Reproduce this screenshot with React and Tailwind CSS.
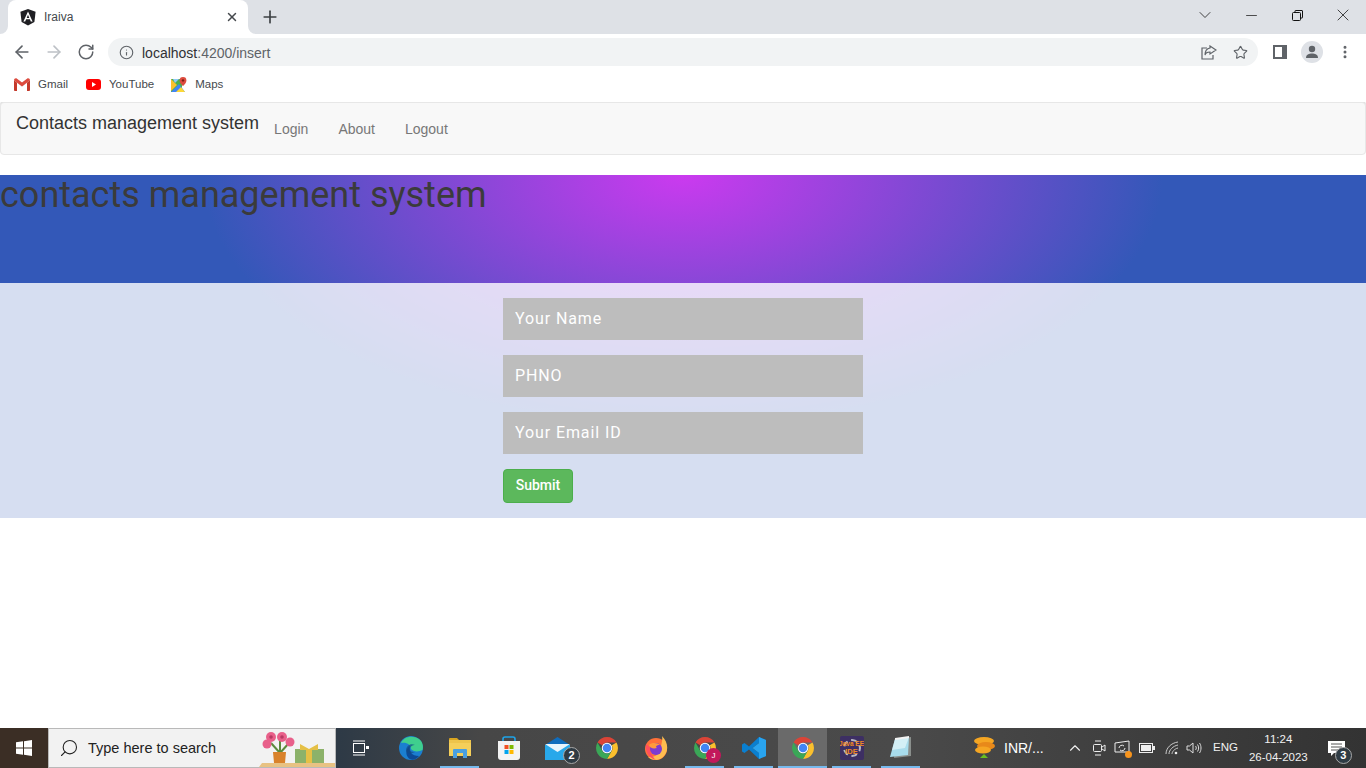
import { ArrowLeft, ArrowRight, RotateCw, Info, Star, X, Plus, ChevronDown, Minus, MoreVertical, ChevronUp, Search } from 'lucide-react'

const sans = "font-['Liberation_Sans',Arial,sans-serif]"

function AngularLogo() {
  return (
    <svg width="16" height="17" viewBox="0 0 16 17">
      <path d="M8 0 L15.6 2.7 L14.4 12.9 L8 16.6 L1.6 12.9 L.4 2.7 Z" fill="#1f1f23" />
      <path d="M8 2.4 L3.4 12.6 H5.2 L6.1 10.3 H9.9 L10.8 12.6 H12.6 Z M8 5.8 L9.3 8.9 H6.7 Z" fill="#fff" fillRule="evenodd" />
    </svg>
  )
}

function GmailIcon() {
  return (
    <svg width="16" height="13" viewBox="0 0 16 13">
      <path d="M0 2 V12 a1 1 0 0 0 1 1 H3 V5 L8 8.6 L13 5 V13 H15 a1 1 0 0 0 1-1 V2 L13 .9 L8 4.6 L3 .9 Z" fill="#d9d9d9" />
      <path d="M0 2.2 L3 4.8 V13 H1 a1 1 0 0 1-1-1 Z" fill="#c5392b" />
      <path d="M16 2.2 L13 4.8 V13 H15 a1 1 0 0 0 1-1 Z" fill="#c5392b" />
      <path d="M0 2.2 C0 .6 1.8 -.4 3 .7 L8 4.6 L13 .7 C14.2 -.4 16 .6 16 2.2 L8 8.4 Z" fill="#dd4b3e" />
    </svg>
  )
}

function YoutubeIcon() {
  return (
    <svg width="15" height="11" viewBox="0 0 15 11">
      <rect width="15" height="11" rx="3" fill="#f00" />
      <path d="M6 3 L10 5.5 L6 8 Z" fill="#fff" />
    </svg>
  )
}

function MapsIcon() {
  return (
    <svg width="16" height="16" viewBox="0 0 16 16">
      <path d="M0 2 H11 V15 H0 Z" fill="#4caf50" />
      <path d="M0 15 L8 7 L14 15 Z" fill="#4285f4" />
      <path d="M0 2 L6 8 L0 14 Z" fill="#fbc02d" />
      <path d="M2 2 H8 L4 6 Z" fill="#90caf9" />
      <path d="M5 15 L10 10 L14 15 Z" fill="#fdd835" />
      <path d="M12 0 a3.4 3.4 0 0 1 3.4 3.4 C15.4 6 12 9 12 9 S8.6 6 8.6 3.4 A3.4 3.4 0 0 1 12 0 Z" fill="#dd4b3e" />
      <circle cx="12" cy="3.4" r="1.2" fill="#7b1f16" />
    </svg>
  )
}

function ChromeIcon({ size = 24 }) {
  return (
    <svg width={size} height={size} viewBox="0 0 48 48">
      <path d="M24 2 A22 22 0 0 1 43 13 H24 A11 11 0 0 0 14.5 18.5 L5 13 A22 22 0 0 1 24 2 Z" fill="#db4437" />
      <path d="M43 13 A22 22 0 0 1 24 46 L33.5 29.5 A11 11 0 0 0 33.5 18.5 Z" fill="#fbc02d" />
      <path d="M24 46 A22 22 0 0 1 5 13 L14.5 29.5 A11 11 0 0 0 33.5 29.5 Z" fill="#3aa757" />
      <circle cx="24" cy="24" r="10.5" fill="#fff" />
      <circle cx="24" cy="24" r="8.5" fill="#4285f4" />
    </svg>
  )
}

function EdgeIcon() {
  return (
    <svg width="24" height="24" viewBox="0 0 24 24">
      <circle cx="12" cy="12" r="12" fill="#1b7fd0" />
      <path d="M2 7 C5 0 14 -1 20 3 C24 6 24.5 11 23.5 14 C20 16 14 16 12 13 C12 9 8 6 2 7 Z" fill="#3fcf8e" />
      <path d="M12 23.6 C6 21 6 13 11 10 C9 15 13 20 20 20 C18 22.6 15 24 12 23.6 Z" fill="#0c4a96" />
      <path d="M7 15 C7 9 12 7 16 9 C14 9 11 10 11 13 C11 16 14 16 16 16 C12 18 8 18 7 15 Z" fill="#134a86" opacity=".7" />
    </svg>
  )
}

function FolderIcon() {
  return (
    <svg width="22" height="20" viewBox="0 0 22 20">
      <path d="M0 1 a1 1 0 0 1 1-1 H8 L10 2 H0 Z" fill="#d9a520" />
      <path d="M0 2 H22 V18 H0 Z" fill="#f5cf5a" />
      <path d="M0 2 H22 V5 H0 Z" fill="#e8b93b" opacity=".5" />
      <path d="M4 18 V12 a1 1 0 0 1 1-1 H17 a1 1 0 0 1 1 1 V20 H14 V15 H8 V20 H4 Z" fill="#4a9fe0" />
    </svg>
  )
}

function StoreIcon() {
  return (
    <svg width="24" height="24" viewBox="0 0 24 24">
      <path d="M6 6 V3 a2 2 0 0 1 2-2 H16 a2 2 0 0 1 2 2 V6" fill="none" stroke="#1ea4e9" strokeWidth="1.6" />
      <path d="M1 5 H23 V21 a3 3 0 0 1-3 3 H4 a3 3 0 0 1-3-3 Z" fill="#f3f3f3" />
      <rect x="7.5" y="9" width="4" height="4" fill="#f25022" />
      <rect x="12.5" y="9" width="4" height="4" fill="#7fba00" />
      <rect x="7.5" y="14" width="4" height="4" fill="#00a4ef" />
      <rect x="12.5" y="14" width="4" height="4" fill="#ffb900" />
    </svg>
  )
}

function MailIcon() {
  return (
    <svg width="25" height="23" viewBox="0 0 25 23">
      <path d="M12.5 0 L25 8 H0 Z" fill="#0f6cbd" />
      <rect y="8" width="25" height="15" fill="#28a8ea" />
      <path d="M0 7 H25 L12.5 15 Z" fill="#e8f4fc" />
    </svg>
  )
}

function FirefoxIcon() {
  return (
    <svg width="24" height="24" viewBox="0 0 24 24">
      <circle cx="12" cy="13" r="11" fill="#ff7139" />
      <path d="M18 0 C24 6 25 14 20 20 C16 25 8 25 4 21 C10 22 17 18 17 12 C17 8 19 4 18 0 Z" fill="#ffbd4f" />
      <path d="M2 8 C1 14 4 22 12 24 C7 20 6 15 7 12 Z" fill="#ff4f5e" />
      <circle cx="12" cy="13" r="6" fill="#7d3bd0" />
      <path d="M5 9 C8 6 14 7 16 9 C12 9 11 11 13 12 C9 13 6 12 5 9 Z" fill="#ff9a3d" />
    </svg>
  )
}

function VscodeIcon() {
  return (
    <svg width="24" height="24" viewBox="0 0 24 24">
      <path d="M17 1 L24 4 V20 L17 23 L7 13.5 L2.5 17 L0 15.5 V8.5 L2.5 7 L7 10.5 Z M17 7 L10.5 12 L17 17 Z" fill="#0a7fd0" fillRule="evenodd" />
      <path d="M17 1 L24 4 V20 L17 23 Z M17 7 V17 L10.5 12 Z" fill="#29a4ef" fillRule="evenodd" />
    </svg>
  )
}

function JavaEeIcon() {
  return (
    <div className="relative flex h-6 w-6 flex-col items-center justify-center overflow-hidden rounded-[2px] bg-[#3d2f63] leading-[8px]">
      <div className="absolute h-[18px] w-[18px] rounded-full border-2 border-dashed border-[#b9b9c4]" />
      <span className={`relative whitespace-nowrap text-[6.5px] font-bold text-[#f08a24] ${sans}`}>Java EE</span>
      <span className={`relative text-[7.5px] font-bold text-[#f08a24] ${sans}`}>IDE</span>
    </div>
  )
}

function NotepadIcon() {
  return (
    <svg width="24" height="24" viewBox="0 0 24 24">
      <path d="M7 3 L22 1 V20 L5 22 Z" fill="#8a8f8c" />
      <path d="M6 3 L20 1 L19 19 L1 21 Z" fill="#a8dcec" />
      <path d="M6 3 L20 1 L16 12 L3 14 Z" fill="#e6f6fb" opacity=".7" />
      <path d="M6 2 L20 0 V2 L6 4 Z" fill="#f3f3f3" />
    </svg>
  )
}

function CoinIcon() {
  return (
    <svg width="24" height="24" viewBox="0 0 24 24">
      <ellipse cx="12" cy="5" rx="10" ry="4" fill="#f5a623" />
      <ellipse cx="14" cy="10" rx="9" ry="4" fill="#e8891a" />
      <ellipse cx="11" cy="14" rx="8" ry="3.5" fill="#f5a623" />
      <path d="M12 18 L16 22 H8 Z" fill="#6bbf1f" />
    </svg>
  )
}

function TaskApp({ children, open, active }) {
  return (
    <div className={`relative flex h-10 w-[49px] shrink-0 items-center justify-center ${active ? 'bg-[#6a6a6a]' : ''}`}>
      {children}
      {open && <div className={`absolute bottom-0 h-[2px] bg-[#76b9ed] ${active ? 'inset-x-0' : 'inset-x-[5px]'}`} />}
    </div>
  )
}

function Badge({ n }) {
  return (
    <div className={`absolute flex h-[17px] w-[17px] items-center justify-center rounded-full border border-[#a8a8a8] bg-[#2f3b44] text-[11px] font-bold text-white ${sans}`}>
      {n}
    </div>
  )
}

function BrowserChrome() {
  return (
    <div className={`shrink-0 ${sans}`}>
      <div className="flex h-[34px] items-end bg-[#dee1e6]">
        <div className="relative ml-2 flex h-[34px] w-[240px] items-center rounded-t-lg bg-white pl-3 pr-[9px]">
          <svg className="absolute bottom-0 -left-2" width="8" height="8"><path d="M8 0 V8 H0 A8 8 0 0 0 8 0 Z" fill="#fff" /></svg>
          <svg className="absolute bottom-0 -right-2" width="8" height="8"><path d="M0 0 V8 H8 A8 8 0 0 1 0 0 Z" fill="#fff" /></svg>
          <AngularLogo />
          <span className="ml-2 flex-1 text-xs text-[#45494d]">Iraiva</span>
          <X size={14} strokeWidth={2.5} className="text-[#45494d]" />
        </div>
        <div className="flex h-[34px] w-[44px] items-center justify-center">
          <Plus size={20} strokeWidth={2} className="text-[#3c4043]" />
        </div>
        <div className="ml-auto flex h-[30px] self-start items-center text-[#222]">
          <div className="flex w-[46px] justify-center"><ChevronDown size={20} strokeWidth={1} /></div>
          <div className="flex w-[46px] justify-center"><Minus size={17} strokeWidth={1.1} /></div>
          <div className="flex w-[46px] justify-center">
            <svg width="11" height="11" viewBox="0 0 11 11" fill="none" stroke="#111" strokeWidth="1">
              <rect x=".5" y="2.5" width="8" height="8" rx="1" />
              <path d="M3 2.5 V1 a.5.5 0 0 1 .5-.5 H10 a.5.5 0 0 1 .5.5 V7.5 a.5.5 0 0 1-.5.5 H8.5" />
            </svg>
          </div>
          <div className="flex w-[46px] justify-center"><X size={20} strokeWidth={1} /></div>
        </div>
      </div>
      <div className="flex h-9 items-center bg-white pl-[12px] pr-[13px]">
        <ArrowLeft size={20} strokeWidth={2} className="text-[#5f6368]" />
        <ArrowRight size={20} strokeWidth={2} className="ml-[12px] text-[#bdc1c6]" />
        <RotateCw size={18} strokeWidth={2} className="ml-[13px] text-[#5f6368]" />
        <div className="ml-[13px] flex h-7 flex-1 items-center rounded-full bg-[#f1f3f4] pl-[11px] pr-[10px]">
          <Info size={15} strokeWidth={1.8} className="text-[#5f6368]" />
          <span className="ml-[8px] flex-1 pt-[1px] text-sm text-[#303134]">localhost<span className="text-[#5f6368]">:4200/insert</span></span>
          <svg width="16" height="15" viewBox="0 0 16 15" fill="none" stroke="#5f6368" strokeWidth="1.2">
            <path d="M6 3 H1 V14 H12 V10" />
            <path d="M9 1 L15 5 L9 9 V7 C6 7 4.5 8 4 10 C4 6 6 3.5 9 3 Z" />
          </svg>
          <Star size={15} strokeWidth={1.8} className="ml-[16px] text-[#5f6368]" />
        </div>
        <svg className="ml-[15px]" width="14" height="14" viewBox="0 0 14 14">
          <rect width="14" height="14" fill="#5f6368" />
          <rect x="2" y="2" width="7" height="10" fill="#fff" />
        </svg>
        <div className="ml-[14px] flex h-[22px] w-[22px] items-center justify-center rounded-full bg-[#dee1e6]">
          <svg width="14" height="14" viewBox="0 0 14 14" fill="#5f6368">
            <circle cx="7" cy="4" r="3.2" />
            <path d="M1 13 C1 9.5 4 8.5 7 8.5 S13 9.5 13 13 Z" />
          </svg>
        </div>
        <MoreVertical size={16} strokeWidth={2.5} className="ml-[14px] text-[#5f6368]" />
      </div>
      <div className="flex h-8 items-center gap-[17px] bg-white pb-[3px] pl-[14px] text-[11.5px] text-[#45494d]">
        <div className="flex items-center gap-2"><GmailIcon /><span className="w-[31px]">Gmail</span></div>
        <div className="flex items-center gap-2"><YoutubeIcon /><span>YouTube</span></div>
        <div className="flex items-center gap-2"><MapsIcon /><span>Maps</span></div>
      </div>
    </div>
  )
}

function FormField({ placeholder }) {
  return (
    <input
      placeholder={placeholder}
      className="h-[42px] w-full bg-[#bdbdbd] px-3 pb-[2px] font-['Roboto',sans-serif] text-base tracking-[0.9px] text-white outline-none placeholder:text-white"
    />
  )
}

function Taskbar() {
  return (
    <div className="flex h-10 shrink-0 items-stretch bg-[linear-gradient(90deg,#3a2f26_0,#2e3a46_340px,#474747_480px,#4a4a4a_900px,#333_1366px)] text-white">
      <div className="flex w-12 shrink-0 items-center justify-center bg-[#3b2e25]">
        <svg width="16" height="16" viewBox="0 0 16 16" fill="#fff">
          <path d="M0 2.3 L7 1.3 V7.5 H0 Z M8 1.2 L16 0 V7.5 H8 Z M0 8.5 H7 V14.7 L0 13.7 Z M8 8.5 H16 V16 L8 14.8 Z" />
        </svg>
      </div>
      <div className="relative flex w-[288px] shrink-0 items-center overflow-hidden border border-[#b9b9b9] bg-[#f2f2f2] pl-[10px]">
        <Search size={20} strokeWidth={1.3} className="-scale-x-100 text-[#222]" />
        <span className={`ml-[9px] pt-[1px] text-[14.5px] text-[#222] ${sans}`}>Type here to search</span>
        <svg className="absolute bottom-0 right-0" width="76" height="38" viewBox="0 0 76 38">
          <path d="M0 38 L3 34 H76 V38 Z" fill="#e8c283" />
          <path d="M21 24 V10 M21 24 L12 14 M21 24 L30 14" stroke="#5c8a3c" strokeWidth="2" />
          <path d="M14 23 H27 L26 34 H15 Z" fill="#d9822b" />
          <circle cx="12" cy="8" r="5" fill="#e8608a" />
          <circle cx="23" cy="8" r="5" fill="#e8608a" />
          <circle cx="31" cy="13" r="4.5" fill="#e8608a" />
          <circle cx="8" cy="15" r="4.5" fill="#e8608a" />
          <circle cx="12" cy="8" r="1.8" fill="#b83a63" />
          <circle cx="23" cy="8" r="1.8" fill="#b83a63" />
          <rect x="36" y="20" width="29" height="14" fill="#8cb26a" />
          <rect x="47" y="20" width="6" height="14" fill="#e5c046" />
          <path d="M41 15 L50 20 L59 15 V21 H41 Z" fill="#e5c046" />
        </svg>
      </div>
      <div className="flex w-[50px] shrink-0 items-center justify-center">
        <svg width="16" height="16" viewBox="0 0 16 16" fill="none" stroke="#fff" strokeWidth="1">
          <rect x=".5" y="3.5" width="11" height="9" />
          <path d="M0 1 H12 M0 15 H12" />
          <rect x="13" y="6" width="3" height="3" fill="#fff" stroke="none" />
        </svg>
      </div>
      <TaskApp><EdgeIcon /></TaskApp>
      <TaskApp open><FolderIcon /></TaskApp>
      <TaskApp><StoreIcon /></TaskApp>
      <TaskApp><MailIcon /><div className="absolute left-[30px] top-[19px]"><Badge n="2" /></div></TaskApp>
      <TaskApp><ChromeIcon /></TaskApp>
      <TaskApp><FirefoxIcon /></TaskApp>
      <TaskApp open>
        <ChromeIcon />
        <div className={`absolute left-[26px] top-[20px] flex h-[15px] w-[15px] items-center justify-center rounded-full bg-[#c2185b] text-[8px] ${sans}`}>J</div>
      </TaskApp>
      <TaskApp open><VscodeIcon /></TaskApp>
      <TaskApp open active><ChromeIcon /></TaskApp>
      <TaskApp open><JavaEeIcon /></TaskApp>
      <TaskApp open><NotepadIcon /></TaskApp>
      <div className={`ml-[47px] flex items-center text-sm ${sans}`}>
        <CoinIcon />
        <span className="ml-2 w-[50px]">INR/...</span>
      </div>
      <div className={`ml-[12px] flex items-center text-[11.5px] text-[#f1f1f1] ${sans}`}>
        <ChevronUp size={18} strokeWidth={1.5} />
        <svg className="ml-[8px]" width="14" height="18" viewBox="0 0 14 18" fill="none" stroke="#eee" strokeWidth="1">
          <rect x="1.5" y="5.5" width="8" height="7" rx="1" />
          <path d="M10 8 L13 6 V12 L10 10 M3 2 H9 M3 16 H9" />
        </svg>
        <div className="relative ml-[8px]">
          <svg width="16" height="16" viewBox="0 0 16 16" fill="none" stroke="#eee" strokeWidth="1">
            <path d="M1 3 L15 1 V12 H1 Z M5 8 a3 3 0 0 1 5-2 M11 8 a3 3 0 0 1-5 2" />
          </svg>
          <div className="absolute -bottom-[2px] -right-[2px] h-[7px] w-[7px] rounded-full bg-[#f7941d]" />
        </div>
        <svg className="ml-[9px]" width="16" height="10" viewBox="0 0 16 10">
          <rect x=".5" y=".5" width="13" height="9" fill="none" stroke="#eee" />
          <rect x="2" y="2" width="10" height="6" fill="#eee" />
          <rect x="14" y="3" width="2" height="4" fill="#eee" />
        </svg>
        <svg className="ml-[10px]" width="14" height="14" viewBox="0 0 14 14" fill="none" stroke="#ccc" strokeWidth="1">
          <path d="M1 13 C1 7 6 2 13 1 M4 13 C4 9 8 5 13 4 M7 13 C7 11 9 8 13 7" />
          <circle cx="11" cy="12" r="1.3" fill="#eee" stroke="none" />
        </svg>
        <svg className="ml-[7px]" width="16" height="14" viewBox="0 0 16 14" fill="none" stroke="#ddd" strokeWidth="1">
          <path d="M1 5 H3.5 L7 2 V12 L3.5 9 H1 Z M9.5 5 C10.5 6 10.5 8 9.5 9 M11.5 3.5 C13 5.5 13 8.5 11.5 10.5 M13.5 2 C15.5 5 15.5 9 13.5 12" />
        </svg>
        <span className="ml-[11px]">ENG</span>
        <div className="ml-[11px] flex flex-col items-center leading-[18px]">
          <span>11:24</span>
          <span>26-04-2023</span>
        </div>
        <div className="relative ml-[20px]">
          <svg width="17" height="15" viewBox="0 0 17 15" fill="#fff">
            <path d="M0 0 H17 V12 H6 L3 15 V12 H0 Z" />
            <path d="M3 3 H14 M3 6 H14 M3 9 H10" stroke="#555" strokeWidth="1" />
          </svg>
          <div className="absolute left-[7px] top-[6px]"><Badge n="3" /></div>
        </div>
      </div>
    </div>
  )
}

export default function App() {
  return (
    <div className="flex h-screen flex-col overflow-hidden bg-white">
      <BrowserChrome />
      <main className="flex-1 overflow-hidden">
        <nav className={`mb-5 flex h-[53px] rounded-[4px] border border-[#e7e7e7] bg-[#f8f8f8] shadow-[0_-1px_1px_#ddd] ${sans}`}>
          <a className="pl-[15px] pt-[10px] text-lg leading-[20px] text-[#333]">Contacts management system</a>
          <ul className="flex">
            <li className="px-[15px] pt-[16px] text-sm leading-[20px] text-[#777]">Login</li>
            <li className="px-[15px] pt-[16px] text-sm leading-[20px] text-[#777]">About</li>
            <li className="px-[15px] pt-[16px] text-sm leading-[20px] text-[#777]">Logout</li>
          </ul>
        </nav>
        <section className="bg-[radial-gradient(ellipse_480px_250px_at_50%_0,#cb3aef,#3358b8)]">
          <header className="h-[108px]">
            <h1 className="font-['Roboto',sans-serif] text-4xl leading-[40px] text-[#3b3b3b]">contacts management system</h1>
          </header>
          <form className="flex flex-col items-center bg-white/80 py-[15px]">
            <div className="flex w-[360px] flex-col items-start gap-[15px]">
              <FormField placeholder="Your Name" />
              <FormField placeholder="PHNO" />
              <FormField placeholder="Your Email ID" />
              <button type="button" className="h-[34px] w-[70px] rounded-[4px] border border-[#4cae4c] bg-[#5cb85c] pb-[2px] font-['Roboto',sans-serif] text-sm font-medium text-white">
                Submit
              </button>
            </div>
          </form>
        </section>
      </main>
      <Taskbar />
    </div>
  )
}
